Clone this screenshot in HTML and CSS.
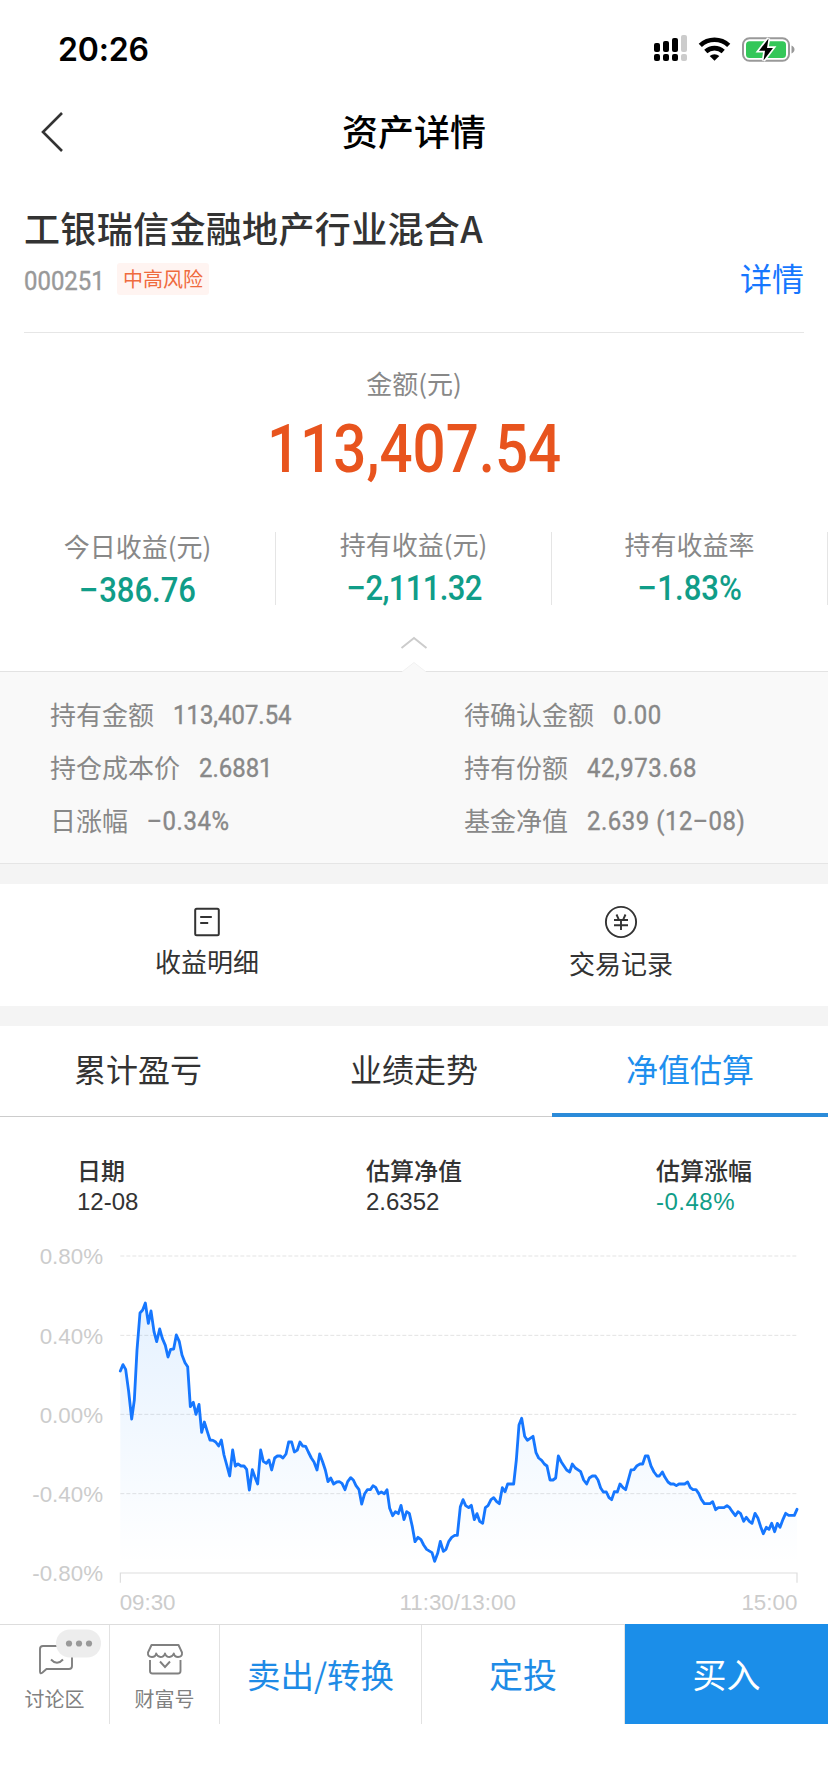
FILE: index.html
```
<!DOCTYPE html>
<html lang="zh-CN">
<head>
<meta charset="utf-8">
<title>资产详情</title>
<link rel="stylesheet" href="styles.css">
</head>
<body>
<div class="page">
  <div class="status">
    <span class="clock">20:26</span>
    <svg class="status-icons" width="144" height="30" viewBox="0 0 144 30">
      <g fill="#000">
        <rect x="1" y="13" width="6" height="9" rx="2"/><rect x="10" y="11" width="6" height="11" rx="2"/><rect x="19" y="8" width="6" height="14" rx="2"/>
        <rect x="1" y="24" width="6" height="7" rx="2"/><rect x="10" y="24" width="6" height="7" rx="2"/><rect x="19" y="24" width="6" height="7" rx="2"/>
      </g>
      <g fill="#ccc"><rect x="28" y="5" width="6" height="17" rx="2"/><rect x="28" y="24" width="6" height="7" rx="2"/></g>
      <g fill="none" stroke="#000" stroke-width="4.600">
        <path d="M47.300 15.400a20.500 20.500 0 0 1 28.400 0"/><path d="M52.800 21.500a12.800 12.800 0 0 1 17.400 0"/>
      </g>
      <path d="M61.500 30.800l-4.800-4.700a7.200 7.200 0 0 1 9.600 0z"/>
      <rect x="90" y="8.200" width="46" height="22.600" rx="6.500" fill="none" stroke="#999" stroke-width="2"/>
      <rect x="93" y="11.300" width="40" height="16.600" rx="3.500" fill="#34c759"/>
      <path d="M138.500 15.500c4 1.500 4 6.500 0 8z" fill="#999"/>
      <path d="M115.500 8.500L106 20.800h6L110.500 30.500 120 18h-6z" fill="#000" stroke="#fff" stroke-width="3.400" paint-order="stroke"/>
    </svg>
  </div>

  <div class="nav">
    <svg class="back" width="24" height="42" viewBox="0 0 24 42"><path d="M22 2L3 21 22 40" fill="none" stroke="#333" stroke-width="2.600"/></svg>
    <h1 class="title">资产详情</h1>
  </div>

  <div class="fund">
    <div class="fund-name">工银瑞信金融地产行业混合A</div>
    <div class="fund-meta">
      <span class="code">000251</span>
      <span class="badge">中高风险</span>
      <span class="detail">详情</span>
    </div>
  </div>

  <div class="total-label">金额(元)</div>
  <div class="total"><span class="total-num">113,407.54</span></div>

  <div class="stats">
    <div class="stat low"><div class="stat-label">今日收益(元)</div><div class="stat-val"><span class="minus">−</span>386.76</div></div>
    <div class="stat"><div class="stat-label">持有收益(元)</div><div class="stat-val tight"><span class="minus">−</span>2,111.32</div></div>
    <div class="stat"><div class="stat-label">持有收益率</div><div class="stat-val"><span class="minus">−</span>1.83%</div></div>
  </div>

  <svg class="fold" width="828" height="67" viewBox="0 605 828 67">
    <path d="M401.500 648L414 638l12.500 10" fill="none" stroke="#ccc" stroke-width="2"/>
    <path d="M402 672l12-9.500 12 9.500z" fill="#f9f9f9"/>
    <path d="M0 671.500H402.500M425.500 671.500H828" fill="none" stroke="#e3e3e3"/>
    <path d="M402.500 671.500L414 662.500 425.500 671.500" fill="none" stroke="#f1f1f1"/>
  </svg>

  <div class="panel">
    <div class="pair"><span>持有金额</span><b class="num">113,407.54</b></div>
    <div class="pair"><span>待确认金额</span><b class="num wide">0.00</b></div>
    <div class="pair"><span>持仓成本价</span><b class="num">2.6881</b></div>
    <div class="pair"><span>持有份额</span><b class="num wide">42,973.68</b></div>
    <div class="pair"><span>日涨幅</span><b class="num wide"><i class="minus">−</i>0.34%</b></div>
    <div class="pair"><span>基金净值</span><b class="num wide">2.639 (12<i class="minus">−</i>08)</b></div>
  </div>
  <div class="band edge"></div>

  <div class="actions">
    <div class="action">
      <svg width="34" height="34" viewBox="0 0 34 34" fill="none" stroke="#333" stroke-width="2"><rect x="5.200" y="3.800" width="23.600" height="26.400" rx="1.500"/><path d="M10.200 12h11.600M10.200 18h8"/></svg>
      <span>收益明细</span>
    </div>
    <div class="action second">
      <svg width="34" height="34" viewBox="0 0 34 34" fill="none" stroke="#333" stroke-width="1.900"><circle cx="17" cy="17" r="15.100"/><path d="M12.500 9.500l2.300 5.200M21.500 9.500l-2.300 5.200M10 15h14M10 20.200h14M17 15v10"/></svg>
      <span>交易记录</span>
    </div>
  </div>
  <div class="band"></div>

  <div class="tabs">
    <div class="tab">累计盈亏</div>
    <div class="tab">业绩走势</div>
    <div class="tab active">净值估算</div>
  </div>

  <div class="info">
    <div><div class="info-label">日期</div><div class="info-val">12-08</div></div>
    <div><div class="info-label">估算净值</div><div class="info-val">2.6352</div></div>
    <div><div class="info-label">估算涨幅</div><div class="info-val green">-0.48%</div></div>
  </div>

  <svg class="chart" width="828" height="394" viewBox="0 0 2484 1182">
    <defs><linearGradient id="area" gradientUnits="userSpaceOnUse" x1="0" y1="219" x2="0" y2="1000"><stop offset="0" stop-color="#1684ff" stop-opacity=".11"/><stop offset="1" stop-color="#1684ff" stop-opacity="0"/></linearGradient></defs>
    <g fill="none" stroke="#e3e3e3" stroke-width="3" stroke-dasharray="12 6"><path d="M361 78H2391M361 316H2391M361 553H2391M361 791H2391"/></g>
    <path d="M361 1058V1029H2391V1058" fill="none" stroke="#ddd" stroke-width="3.500"/>
    <path id="fill" fill="url(#area)"/>
    <polyline id="line" fill="none" stroke="#1677ff" stroke-width="8.500" stroke-linejoin="round" stroke-linecap="round" points="361,423 369,404 377,418 386,485 395,567 403,510 411,360 420,249 428,240 436,219 445,280 453,243 462,305 470,335 479,297 487,325 496,346 504,381 512,358 521,357 529,315 538,335 546,375 555,398 563,410 571,530 580,517 588,553 597,523 605,607 613,576 622,605 630,630 639,631 647,636 656,648 664,630 672,675 681,708 689,738 698,660 706,708 714,702 723,708 732,708 740,718 748,780 757,719 765,742 773,762 782,660 790,694 799,700 807,690 815,720 824,684 832,678 841,678 849,684 858,672 866,636 875,636 883,666 892,660 900,636 908,648 917,649 925,666 934,684 942,696 951,720 959,672 968,696 976,720 984,755 992,744 1001,762 1010,756 1018,755 1026,760 1035,779 1043,755 1052,743 1060,750 1068,767 1077,779 1085,822 1094,791 1102,779 1111,779 1119,767 1127,772 1136,791 1144,786 1153,791 1161,779 1169,835 1178,857 1186,845 1195,851 1203,826 1212,869 1220,845 1228,850 1237,890 1245,935 1254,922 1263,929 1271,945 1280,958 1296,968 1304,994 1313,970 1321,934 1330,964 1338,958 1346,935 1355,922 1364,916 1372,916 1381,830 1389,809 1397,827 1406,833 1414,826 1423,869 1431,851 1439,874 1448,880 1456,833 1464,827 1473,809 1481,803 1490,815 1498,821 1507,773 1515,785 1523,762 1541,762 1549,690 1557,585 1565,565 1574,619 1582,631 1599,619 1608,668 1616,684 1625,691 1633,702 1641,708 1650,750 1659,750 1667,744 1675,678 1684,696 1692,708 1700,720 1709,726 1717,702 1726,714 1742,725 1751,750 1760,762 1768,744 1777,738 1786,738 1794,750 1802,774 1810,786 1819,786 1827,803 1835,809 1843,785 1852,786 1860,762 1869,773 1877,779 1893,720 1902,719 1911,707 1920,702 1928,702 1936,678 1944,678 1953,708 1962,726 1971,738 1978,738 1987,726 1995,742 2004,756 2012,762 2021,762 2029,767 2037,762 2054,762 2063,756 2071,773 2079,779 2088,779 2096,790 2104,808 2113,821 2130,821 2138,815 2147,839 2155,833 2172,833 2181,827 2189,833 2197,845 2206,857 2214,845 2222,851 2231,874 2239,862 2248,874 2256,880 2265,850 2274,865 2282,890 2290,911 2299,892 2307,898 2315,880 2324,905 2332,880 2340,892 2349,868 2357,850 2366,856 2383,856 2391,838"/>
    <g class="axis" text-anchor="end"><text x="309" y="102">0.80%</text><text x="309" y="341">0.40%</text><text x="309" y="578">0.00%</text><text x="309" y="815">-0.40%</text><text x="309" y="1053">-0.80%</text></g>
    <g class="axis"><text x="359" y="1140">09:30</text><text x="1373" y="1140" text-anchor="middle">11:30/13:00</text><text x="2392" y="1140" text-anchor="end">15:00</text></g>
  </svg>

  <div class="bar">
    <div class="mini">
      <svg width="70" height="52" viewBox="0 0 70 52">
        <path d="M31 17H12a3 3 0 0 0-3 3V42.500Q9 45.500 11.500 43.500L15.500 40H38a3 3 0 0 0 3-3V27" fill="none" stroke="#808080" stroke-width="1.900"/>
        <path d="M20 30.500q6 6.600 12 0" fill="none" stroke="#808080" stroke-width="1.900"/>
        <rect x="25" y="0.500" width="45" height="28" rx="14" fill="#ededed"/>
        <g fill="#999"><circle cx="38" cy="14.500" r="3.100"/><circle cx="48" cy="14.500" r="3.100"/><circle cx="58" cy="14.500" r="3.100"/></g>
      </svg>
      <span>讨论区</span>
    </div>
    <div class="mini shop">
      <svg width="38" height="34" viewBox="0 0 38 34" fill="none" stroke="#808080" stroke-width="1.900">
        <path d="M5.500 2H32.500L36 9.500Q36.500 14 32 14 28.500 14 27.800 10.500 26.500 14 23.500 14 20 14 19 10.500 18 14 14.500 14 11.500 14 10.200 10.500 9.500 14 6 14 1.500 14 2 9.500z" stroke-linejoin="round"/>
        <path d="M4 17V28a2.500 2.500 0 0 0 2.500 2.500H32a2.500 2.500 0 0 0 2.500-2.500V17M14 18.500l5 5.500 5-5.500"/>
      </svg>
      <span>财富号</span>
    </div>
    <div class="cta sell">卖出/转换</div>
    <div class="cta">定投</div>
    <div class="cta buy">买入</div>
  </div>
</div>
<script>
  const pts = document.getElementById('line').getAttribute('points');
  document.getElementById('fill').setAttribute('d', 'M361,1028 L' + pts + ' L2391,1028 Z');
</script>
</body>
</html>
```
FILE: styles.css
```
* { box-sizing: border-box; }
body { margin: 0; background: #fff; color: #333; font-family: "Noto Sans CJK SC", sans-serif; }
.page { width: 828px; height: 1792px; overflow: hidden; background: #fff; }
.page svg { display: block; flex: none; }

.status { display: flex; justify-content: space-between; height: 96px; padding: 30px 31px 0 58px; }
.clock { font: 600 32px/40px Inter, sans-serif; color: #000; letter-spacing: -0.2px; }
.status-icons { overflow: visible; }

.nav { display: grid; grid-template-columns: 100px 1fr 100px; align-items: center; height: 72px; }
.back { margin-left: 40px; }
.title { margin: -4px 0 0; text-align: center; font-size: 36px; line-height: 50px; font-weight: 500; color: #000; }

.fund { height: 165px; margin: 0 24px; padding-top: 34px; border-bottom: 1px solid #e6e6e6; }
.fund-name { font-size: 36px; line-height: 50px; font-weight: 500; letter-spacing: 0.35px; }
.fund-meta { display: flex; align-items: center; height: 50px; padding-top: 4px; }
.code { width: 93px; font: 400 26px/32px Roboto, sans-serif; color: #999; transform: scaleX(.92); transform-origin: 0 50%; margin-top: 3px; -webkit-text-stroke: 0.4px #999; }
.badge { height: 32px; padding: 0 6px; background: #fff4f1; color: #ef6b3e; font-size: 20px; line-height: 31px; border-radius: 3px; }
.detail { margin: -5px 0 0 auto; font-size: 32px; line-height: 46px; color: #1677ff; }

.total-label { margin-top: 31px; text-align: center; font-size: 26px; line-height: 38px; color: #888; }
.total { height: 80px; margin-top: 7px; text-align: center; }
.total-num { display: inline-block; font: 500 67px/80px Roboto, sans-serif; color: #e8541e; transform: scaleX(.87); }

.stats { display: grid; grid-template-columns: repeat(3, 276px); height: 73px; margin-top: 43px; }
.stat { height: 73px; text-align: center; border-right: 1px solid #e5e5e5; }
.stat.low { padding-top: 2px; }
.stat-label { margin-top: -1px; font-size: 26px; line-height: 26px; color: #888; white-space: nowrap; }
.stat-val { margin-top: 11px; font: 500 34.500px/40px Roboto, sans-serif; color: #109d88; transform: scaleX(.9); }
.stat-val.tight { letter-spacing: -0.7px; }
.minus { display: inline-block; width: .65em; font-style: normal; text-align: center; transform: scaleX(1.15); }

.panel { display: grid; grid-template-columns: 414px 414px; grid-auto-rows: 53px; height: 191px; padding-top: 17px; background: #f9f9f9; color: #888; }
.pair { display: flex; align-items: center; gap: 19px; height: 53px; padding-left: 50px; font-size: 26px; line-height: 53px; white-space: nowrap; }
.pair span { margin-top: -4px; }
.num { font: 400 26px/53px Roboto, sans-serif; transform: scaleX(.92); transform-origin: 0 50%; -webkit-text-stroke: 0.4px #888; }
.num.wide { letter-spacing: 0.6px; }
.band { height: 20px; background: #f4f4f4; }
.band.edge { height: 21px; border-top: 1px solid #e5e5e5; }

.actions { display: grid; grid-template-columns: 1fr 1fr; height: 122px; }
.action { display: flex; flex-direction: column; align-items: center; gap: 3px; padding-top: 21px; font-size: 26px; line-height: 38px; }
.action.second { gap: 5px; }

.tabs { display: grid; grid-template-columns: repeat(3, 276px); height: 91px; border-bottom: 1px solid #ccc; }
.tab { height: 91px; text-align: center; font-size: 32px; line-height: 85px; }
.tab.active { color: #1e8fee; border-bottom: 4px solid #2b8bd9; }

.info { display: grid; grid-template-columns: 289px 290px 1fr; height: 113px; padding: 36px 0 0 77px; }
.info-label { font-size: 24px; line-height: 34px; font-weight: 500; }
.info-val { margin-top: 1px; font: 24px/28px "Liberation Sans", sans-serif; }
.green { color: #109d88; letter-spacing: 0.5px; }

.axis { font: 67px "Liberation Sans", sans-serif; fill: #ccc; }

.bar { display: grid; grid-template-columns: 110px 110px 202px 203px 203px; height: 100px; border-top: 1px solid #ddd; }
.mini { display: flex; flex-direction: column; align-items: center; padding-top: 4px; border-right: 1px solid #e2e2e2; font-size: 20px; line-height: 28px; color: #808080; }
.mini svg { margin-left: 22px; }
.mini span { margin-top: 4px; }
.mini.shop { padding-top: 18px; }
.mini.shop svg { margin-left: 0; }
.mini.shop span { margin-top: 8px; }
.cta { text-align: center; font-size: 34px; line-height: 98px; color: #1e8be6; border-right: 1px solid #e2e2e2; }
.cta.sell { font-size: 33.500px; }
.cta.buy { margin-top: -1px; line-height: 100px; background: #1b8ee9; color: #fff; border: 0; }
```
